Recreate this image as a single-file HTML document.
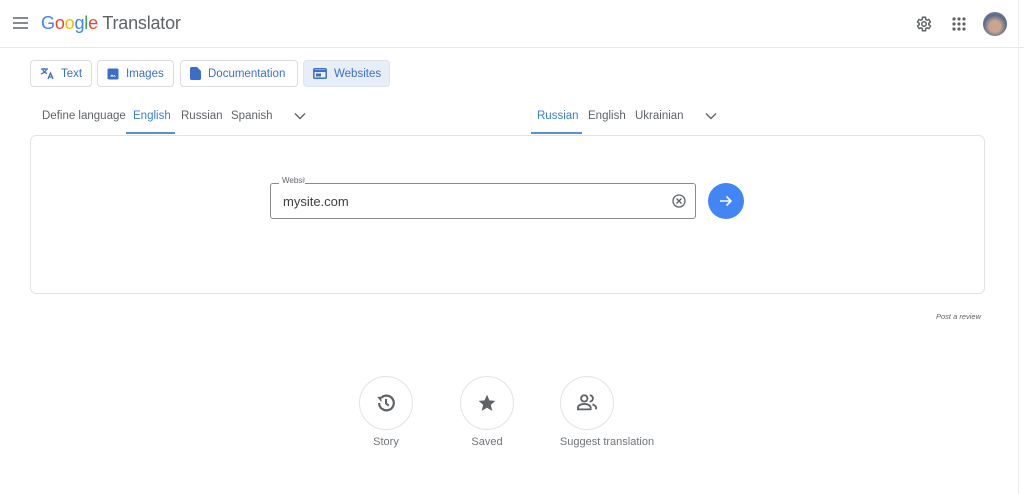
<!DOCTYPE html>
<html><head><style>
*{box-sizing:border-box;margin:0;padding:0}
body{width:1024px;height:494px;background:#fff;font-family:"Liberation Sans",Arial,sans-serif;position:relative;overflow:hidden;color:#5f6368}
.a{position:absolute}
.hdr{left:0;top:0;width:1024px;height:48px;border-bottom:1px solid #e6e6e6}
.tab{position:absolute;top:60px;height:27px;border:1px solid #dadce0;border-radius:4px;font-size:11.5px;display:flex;align-items:center;padding-left:9px;gap:7px;color:#3c6ec8}
.lang{position:absolute;top:110px;font-size:11.5px;color:#5f6368}
.cap{font-size:11px;color:#70757a;position:absolute;text-align:center}
.circ{position:absolute;top:376px;width:54px;height:54px;border:1px solid #e3e3e3;border-radius:50%;display:flex;align-items:center;justify-content:center}
</style></head><body>
<div class="a hdr"></div>
<div class="a" style="left:1018px;top:0;width:1px;height:494px;background:#eee"></div>
<svg class="a" style="left:13px;top:16px" width="16" height="14"><path d="M0 2h15M0 7h15M0 12h15" stroke="#5f6368" stroke-width="1.6"/></svg>
<div class="a" style="left:41px;top:13px;font-size:18px;letter-spacing:-0.2px"><span style="color:#4285f4">G</span><span style="color:#ea4335">o</span><span style="color:#fbbc05">o</span><span style="color:#4285f4">g</span><span style="color:#34a853">l</span><span style="color:#ea4335">e</span> <span style="color:#5f6368">Translator</span></div>
<svg class="a" style="left:915px;top:15px" width="18" height="18" viewBox="0 0 24 24"><path d="M19.4 13a7.5 7.5 0 0 0 0-2l2.1-1.6-2-3.5-2.5 1a7.4 7.4 0 0 0-1.7-1L15 3h-4l-.4 2.9a7.4 7.4 0 0 0-1.7 1l-2.5-1-2 3.5L6.6 11a7.5 7.5 0 0 0 0 2l-2.1 1.6 2 3.5 2.5-1a7.4 7.4 0 0 0 1.7 1L11 21h4l.4-2.9a7.4 7.4 0 0 0 1.7-1l2.5 1 2-3.5z" fill="none" stroke="#5f6368" stroke-width="2" transform="translate(-1 0)"/><circle cx="12" cy="12" r="3" fill="none" stroke="#5f6368" stroke-width="2"/></svg>
<svg class="a" style="left:952px;top:17px" width="14" height="14"><g fill="#5f6368"><circle cx="2" cy="2" r="1.6"/><circle cx="7" cy="2" r="1.6"/><circle cx="12" cy="2" r="1.6"/><circle cx="2" cy="7" r="1.6"/><circle cx="7" cy="7" r="1.6"/><circle cx="12" cy="7" r="1.6"/><circle cx="2" cy="12" r="1.6"/><circle cx="7" cy="12" r="1.6"/><circle cx="12" cy="12" r="1.6"/></g></svg>
<div class="a" style="left:983px;top:12px;width:24px;height:24px;border-radius:50%;background:radial-gradient(circle at 50% 60%,#c9a48e 30%,#5a6a8a 60%,#8a94a8)"></div>

<div class="tab" style="left:30px;width:62px"><svg width="14" height="13" viewBox="0 0 14 13"><path d="M1 2h7M4.5 1v1M2.5 2c.7 2 2.5 3.8 4.5 4.5M6.5 2c-.5 2-2.5 4-5.5 5M8 12l2.5-6 2.5 6M8.8 10h3.4" stroke="#3c6ec8" stroke-width="1.3" fill="none"/></svg>Text</div>
<div class="tab" style="left:97px;width:77px"><svg width="12" height="12"><rect x="0.5" y="0.5" width="11" height="11" rx="1.5" fill="#3c6ec8"/><path d="M3 8.5l2-2 1.5 1.5 1-1 1.5 1.5z" fill="#fff"/></svg>Images</div>
<div class="tab" style="left:180px;width:118px"><svg width="11" height="13"><path d="M0 1.5C0 .7.7 0 1.5 0H7l4 4v7.5c0 .8-.7 1.5-1.5 1.5h-8C.7 13 0 12.3 0 11.5z" fill="#3c6ec8"/></svg>Documentation</div>
<div class="tab" style="left:303px;width:87px;background:#e8eef8;border-color:#dbe3f0"><svg width="14" height="11"><rect x="0.8" y="0.8" width="12.4" height="9.4" rx="1" fill="none" stroke="#3c6ec8" stroke-width="1.5"/><rect x="0.8" y="2" width="12.4" height="2" fill="#3c6ec8"/><rect x="3" y="5.5" width="5" height="3" fill="#3c6ec8"/></svg>Websites</div>

<div class="lang" style="left:42px">Define language</div>
<div class="lang" style="left:133px;color:#3c7fd1">English</div>
<div class="lang" style="left:181px">Russian</div>
<div class="lang" style="left:231px">Spanish</div>
<svg class="a" style="left:294px;top:112px" width="12" height="8"><path d="M1 1.5l5 5 5-5" stroke="#5f6368" stroke-width="1.4" fill="none"/></svg>
<div class="a" style="left:126px;top:132px;width:49px;height:2px;background:#5a8fd8"></div>
<div class="lang" style="left:537px;color:#3c7fd1">Russian</div>
<div class="lang" style="left:588px">English</div>
<div class="lang" style="left:635px">Ukrainian</div>
<svg class="a" style="left:705px;top:112px" width="12" height="8"><path d="M1 1.5l5 5 5-5" stroke="#5f6368" stroke-width="1.4" fill="none"/></svg>
<div class="a" style="left:531px;top:132px;width:51px;height:2px;background:#5a8fd8"></div>

<div class="a" style="left:30px;top:135px;width:955px;height:159px;border:1px solid #e3e3e3;border-radius:6px"></div>
<div class="a" style="left:270px;top:183px;width:426px;height:36px;border:1px solid #8a8a8a;border-radius:3px"></div>
<div class="a" style="left:279px;top:176px;font-size:8px;background:#fff;padding:0 3px;color:#5f6368;width:26px;overflow:hidden;white-space:nowrap">Website</div>
<div class="a" style="left:283px;top:194px;font-size:13px;color:#3c4043">mysite.com</div>
<svg class="a" style="left:672px;top:194px" width="14" height="14"><circle cx="7" cy="7" r="6" fill="none" stroke="#5f6368" stroke-width="1.3"/><path d="M4.5 4.5l5 5M9.5 4.5l-5 5" stroke="#5f6368" stroke-width="1.3"/></svg>
<div class="a" style="left:708px;top:183px;width:36px;height:36px;border-radius:50%;background:#4285f4"></div>
<svg class="a" style="left:718px;top:193px" width="16" height="16"><path d="M2 8h11M8.5 3.5L13 8l-4.5 4.5" stroke="#fff" stroke-width="1.6" fill="none"/></svg>

<div class="a" style="left:936px;top:312px;font-size:7.5px;font-style:italic;color:#5f6368">Post a review</div>

<div class="circ" style="left:359px"><svg width="22" height="22" viewBox="0 0 24 24"><path d="M4.5 12A8 8 0 1 0 7 6.2" stroke="#5f6368" stroke-width="2.4" fill="none"/><path d="M2.5 5.5L7 11V5z" fill="#5f6368"/><path d="M12 7.5V12.5l3 2.5" stroke="#5f6368" stroke-width="2.2" fill="none"/></svg></div>
<div class="circ" style="left:460px"><svg width="20" height="20" viewBox="0 0 24 24"><path d="M12 2l2.9 6.9 7.1.6-5.4 4.7 1.7 7.3L12 17.7 5.7 21.5l1.7-7.3L2 9.5l7.1-.6z" fill="#5f6368"/></svg></div>
<div class="circ" style="left:560px"><svg width="22" height="20" viewBox="0 0 24 22"><circle cx="9" cy="6" r="3.5" stroke="#5f6368" stroke-width="2" fill="none"/><path d="M2 18v-2c0-2.5 4-4 7-4s7 1.5 7 4v2z" stroke="#5f6368" stroke-width="2" fill="none"/><path d="M15 2.5a3.5 3.5 0 0 1 0 7M18 12.5c2 .8 4 2 4 3.5v2" stroke="#5f6368" stroke-width="2" fill="none"/></svg></div>
<div class="cap" style="left:346px;top:436px;width:80px">Story</div>
<div class="cap" style="left:447px;top:436px;width:80px">Saved</div>
<div class="cap" style="left:547px;top:436px;width:120px">Suggest translation</div>
</body></html>
